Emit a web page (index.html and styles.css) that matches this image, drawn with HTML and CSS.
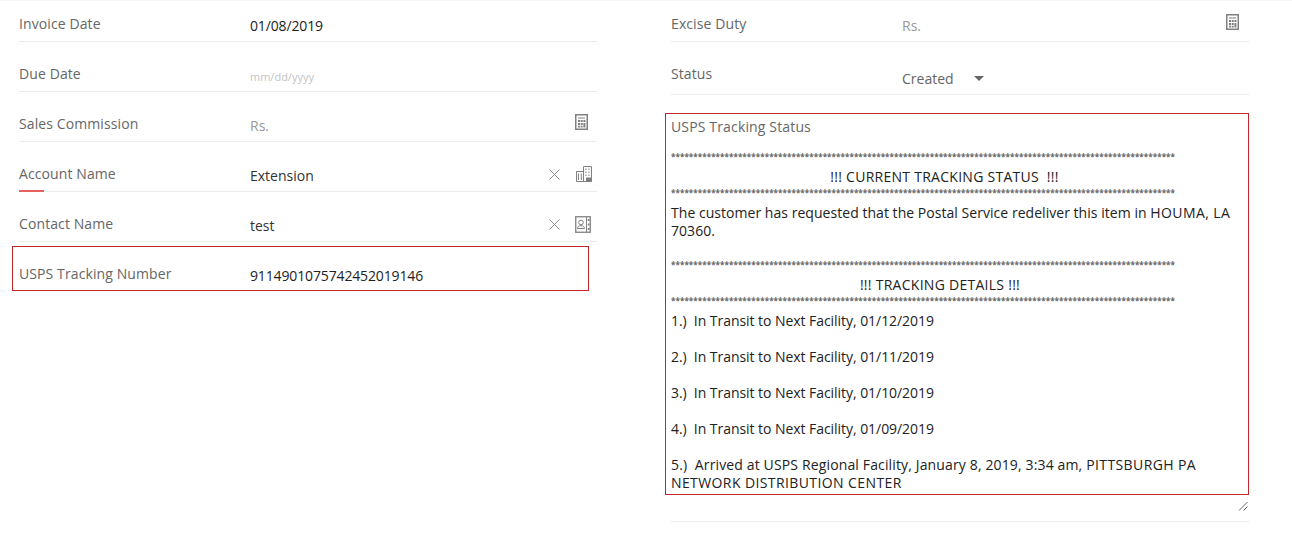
FILE: index.html
```html
<!DOCTYPE html>
<html lang="en">
<head>
<meta charset="utf-8">
<title>Invoice</title>
<link rel="stylesheet" href="styles.css">
</head>
<body>
<main class="form">
  <section class="col">
    <div class="row"><span class="label">Invoice Date</span><span class="value num">01/08/2019</span></div>
    <div class="row"><span class="label">Due Date</span><span class="value hint">mm/dd/yyyy</span></div>
    <div class="row"><span class="label">Sales Commission</span><span class="value muted">Rs.</span>
      <svg class="calc" width="13" height="16" viewBox="0 0 13 16"><use href="#i-calc"/></svg></div>
    <div class="row focus"><span class="label">Account Name</span><span class="value soft">Extension</span>
      <svg class="clear" width="11" height="11" viewBox="0 0 11 11"><use href="#i-x"/></svg>
      <svg class="building" width="16" height="16" viewBox="0 0 16 16"><use href="#i-building"/></svg></div>
    <div class="row"><span class="label">Contact Name</span><span class="value soft">test</span>
      <svg class="clear tight" width="11" height="11" viewBox="0 0 11 11"><use href="#i-x"/></svg>
      <svg class="contact" width="16" height="17" viewBox="0 0 16 17"><use href="#i-contact"/></svg></div>
    <div class="row plain"><span class="label">USPS Tracking Number</span><span class="value num">9114901075742452019146</span></div>
    <div class="mark mark-number"></div>
  </section>
  <section class="col">
    <div class="row"><span class="label">Excise Duty</span><span class="value muted">Rs.</span>
      <svg class="calc calc-end" width="13" height="16" viewBox="0 0 13 16"><use href="#i-calc"/></svg></div>
    <div class="row status"><span class="label">Status</span><span class="value soft select">Created<i class="caret"></i></span></div>
    <div class="area">
      <div class="area-label">USPS Tracking Status</div>
      <div class="stars s1">*****************************************************************************************************************</div>
      <div class="center c1">!!! CURRENT TRACKING STATUS&nbsp; !!!</div>
      <div class="stars">*****************************************************************************************************************</div>
      <p class="msg m1">The customer has requested that the Postal Service redeliver this item in <span class="caps">HOUMA, LA</span> 70360.</p>
      <div class="stars s3">*****************************************************************************************************************</div>
      <div class="center c2">!!! TRACKING DETAILS !!!</div>
      <div class="stars">*****************************************************************************************************************</div>
      <p class="msg m1 item">1.)&nbsp; In Transit to Next Facility, 01/12/2019</p>
      <p class="msg item">2.)&nbsp; In Transit to Next Facility, 01/11/2019</p>
      <p class="msg item">3.)&nbsp; In Transit to Next Facility, 01/10/2019</p>
      <p class="msg item">4.)&nbsp; In Transit to Next Facility, 01/09/2019</p>
      <p class="msg last">5.)&nbsp; Arrived at USPS Regional Facility, January 8, 2019, 3:34 am, <span class="caps">PITTSBURGH PA</span> <span class="caps">NETWORK DISTRIBUTION CENTER</span></p>
      <svg class="grip" width="10" height="10" viewBox="0 0 10 10"><path d="M1 9.500 9.500 1M5.500 9.500 9.500 5.500" fill="none" stroke="#666" stroke-width="1"/></svg>
    </div>
    <div class="mark mark-status"></div>
  </section>
</main>
<svg class="defs" width="0" height="0">
  <defs>
    <g id="i-calc">
      <rect x=".75" y=".75" width="11.500" height="14.500" fill="none" stroke="#808080" stroke-width="1.500"/>
      <path d="M3 3.500h7v1H3zM3 6h2v2H3zM5.700 6h2v2h-2zM8.400 6h2v2h-2zM3 9h2v2H3zM5.700 9h2v2h-2zM8.400 9h2v4.500h-2zM3 11.800h2v1.700H3zM5.700 11.800h2v1.700h-2z" fill="#808080"/>
    </g>
    <path id="i-x" d="M.5.500 10.500 10.500M10.500.500.500 10.500" fill="none" stroke="#8c8c8c" stroke-width="1"/>
    <g id="i-building">
      <path d="M.5 15.500V5.500h7M7.500 15.500V.5h8v15H.5" fill="none" stroke="#808080"/>
      <path d="M2 7.500h1v6.500H2zM4.800 7.500h1v6.500h-1zM9.500 2.500h1v1.500h-1zM12.500 2.500h1v1.500h-1zM9.500 5.500h1v1.500h-1zM12.500 5.500h1v1.500h-1zM9.500 8.500h1v1.500h-1zM12.500 8.500h1v1.500h-1zM10 11.500h5.500V16H10z" fill="#808080"/>
    </g>
    <g id="i-contact">
      <rect x=".75" y=".75" width="14.500" height="15.500" fill="none" stroke="#808080" stroke-width="1.300"/>
      <path d="M11.500 1v15" fill="none" stroke="#808080"/>
      <path d="M12.800 3h1.700v2h-1.700zM12.800 7.500h1.700v2h-1.700zM12.800 12h1.700v2h-1.700z" fill="#808080"/>
      <circle cx="6" cy="6.500" r="2.300" fill="none" stroke="#808080"/>
      <path d="M2.500 12.500c0-2 1.500-2.800 3.500-2.800s3.500.8 3.500 2.800z" fill="none" stroke="#808080"/>
    </g>
  </defs>
</svg>
</body>
</html>
```

FILE: styles.css
```css
* { box-sizing: border-box; }
html, body { margin: 0; padding: 0; }
body {
  background: #fff;
  border-top: 1px solid #f5f5f5;
  font-family: "Open Sans", "Liberation Sans", sans-serif;
  font-size: 14px;
  color: #222;
  overflow: hidden;
  height: 533px;
}
.form {
  display: grid;
  grid-template-columns: 578px 578px;
  column-gap: 74px;
  padding-left: 19px;
}
.col { position: relative; }
.row {
  display: flex;
  align-items: flex-end;
  height: 50px;
  border-bottom: 1px solid #ececec;
  position: relative;
}
.row:first-child { height: 41px; }
.row.plain { border-bottom-color: transparent; }
.label {
  width: 231px;
  flex: none;
  line-height: 17px;
  padding-bottom: 9px;
  color: #666;
  letter-spacing: .1px;
}
.value {
  flex: 1;
  line-height: 17px;
  padding-bottom: 7px;
  color: #222;
}
.num { letter-spacing: -.14px; }
.soft { color: #333; }
.muted { color: #999; }
.hint { color: #c4c4c4; font-size: 11px; padding-bottom: 6px; }
.calc { flex: none; margin: 0 9px 11px 0; }
.calc-end { margin-right: 10px; }
.building { flex: none; margin: 0 5px 9px 0; }
.contact { flex: none; margin: 0 6px 8px 0; }
.clear { flex: none; margin: 0 16px 11px 0; }
.clear.tight { margin-right: 15px; }
.focus::after {
  content: "";
  position: absolute;
  left: 0;
  bottom: -1px;
  width: 25px;
  height: 2px;
  background: #e4615c;
}
.status { height: 53px; }
.status .label { padding-bottom: 12px; }
.select { color: #666; display: flex; align-items: center; padding-bottom: 7px; }
.caret {
  width: 0;
  height: 0;
  margin-left: 20px;
  border-left: 5px solid transparent;
  border-right: 5px solid transparent;
  border-top: 5px solid #666;
}
.area {
  position: relative;
  margin-top: 23px;
  height: 404px;
  border-bottom: 1px solid #ececec;
  line-height: 18px;
  color: #222;
}
.area-label { color: #666; line-height: 18px; letter-spacing: .15px; }
.stars {
  font-size: 8.1px;
  font-weight: 700;
  letter-spacing: .05px;
  line-height: 18px;
  color: #666;
  white-space: nowrap;
  overflow: hidden;
  margin: -2px 0 2px;
}
.s1 { margin-top: 12px; }
.s3 { margin-top: 16px; }
.center { text-align: center; letter-spacing: .27px; }
.c1 { padding-right: 31px; }
.c2 { padding-right: 40px; }
.msg { margin: 18px 0 0; letter-spacing: .04px; }
.msg.m1 { margin-top: 0; }
.item { letter-spacing: -.05px; }
.last { letter-spacing: .14px; }
.caps { letter-spacing: .4px; }
.grip { position: absolute; right: 1px; bottom: 10px; }
.mark { position: absolute; border: 1px solid #c5242b; pointer-events: none; }
.mark-number { left: -7px; top: 245px; width: 577px; height: 45px; }
.mark-status { left: -6px; top: 112px; width: 584px; height: 382px; }
.defs { position: absolute; }
```
